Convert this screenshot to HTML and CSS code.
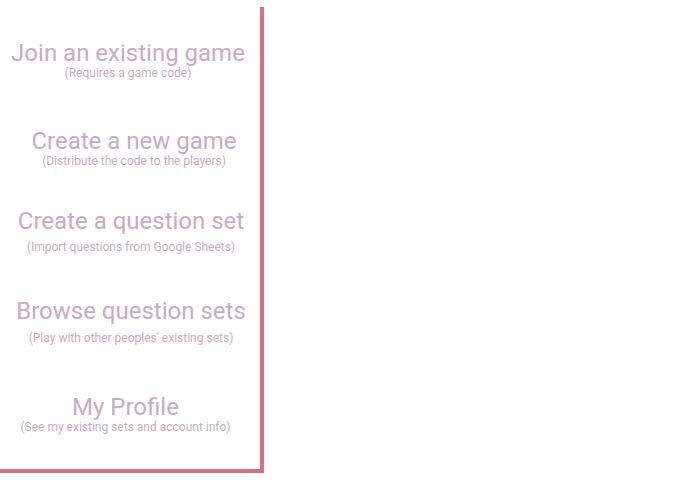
FILE: index.html
```html
<!DOCTYPE html>
<html lang="en">
<head>
<meta charset="utf-8">
<title>Menu</title>
<link rel="stylesheet" href="styles.css">
</head>
<body>
  <nav class="panel">
    <a class="item item--join" href="#">
      <span class="item__title">Join an existing game</span>
      <span class="item__sub">(Requires a game code)</span>
    </a>
    <a class="item item--new" href="#">
      <span class="item__title">Create a new game</span>
      <span class="item__sub">(Distribute the code to the players)</span>
    </a>
    <a class="item item--set" href="#">
      <span class="item__title">Create a question set</span>
      <span class="item__sub">(Import questions from Google Sheets)</span>
    </a>
    <a class="item item--browse" href="#">
      <span class="item__title">Browse question sets</span>
      <span class="item__sub">(Play with other peoples' existing sets)</span>
    </a>
    <a class="item item--profile" href="#">
      <span class="item__title">My Profile</span>
      <span class="item__sub">(See my existing sets and account info)</span>
    </a>
  </nav>
</body>
</html>
```

FILE: styles.css
```css
html, body {
  margin: 0;
  padding: 0;
  background: #ffffff;
}

body {
  font-family: Roboto, "Liberation Sans", sans-serif;
  color: #c8abc5;
}

.panel {
  box-sizing: border-box;
  width: 264px;
  height: 466px;
  margin-top: 7px;
  padding-top: 33px;
  border-right: 4px solid #dc6b84;
  border-bottom: 4px solid #dc6b84;
  display: flex;
  flex-direction: column;
}

.item {
  display: flex;
  flex-direction: column;
  align-items: center;
  text-align: center;
  text-decoration: none;
  color: inherit;
  --sub-gap: 0px;
}

.item__title {
  font-size: 24px;
  line-height: 26px;
  font-weight: 400;
}

.item__sub {
  font-size: 12px;
  line-height: 14px;
  margin-top: var(--sub-gap);
}

.item--join { padding-right: 4px; }
.item--new { margin-top: 48px; padding-left: 8px; }
.item--set { margin-top: 40px; padding-left: 2px; --sub-gap: 6px; }
.item--browse { margin-top: 44px; padding-left: 2px; --sub-gap: 7px; }
.item--profile { margin-top: 49px; padding-right: 9px; }
```
